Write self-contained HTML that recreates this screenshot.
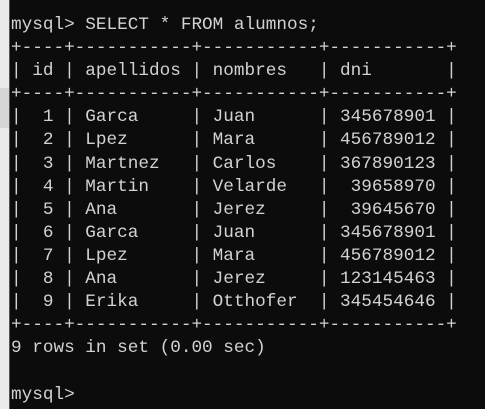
<!DOCTYPE html>
<html><head><style>
body{margin:0;width:485px;height:409px;overflow:hidden;background:#0c0c0c;position:relative}
.strip{position:absolute;left:0;top:0;width:9px;height:409px;background:#eaeaea;border-right:1px solid #555}
.band{position:absolute;left:0;top:88px;width:9px;height:40px;background:#d6d6d6}
pre{position:absolute;left:11px;top:14px;margin:0;font-family:"Liberation Mono",monospace;font-size:17.7px;line-height:23.1px;color:#d2d2d2;letter-spacing:0}
</style></head><body>
<div class="strip"></div><div class="band"></div>
<pre>mysql&gt; SELECT * FROM alumnos;
+----+-----------+-----------+-----------+
| id | apellidos | nombres   | dni       |
+----+-----------+-----------+-----------+
|  1 | Garca     | Juan      | 345678901 |
|  2 | Lpez      | Mara      | 456789012 |
|  3 | Martnez   | Carlos    | 367890123 |
|  4 | Martin    | Velarde   |  39658970 |
|  5 | Ana       | Jerez     |  39645670 |
|  6 | Garca     | Juan      | 345678901 |
|  7 | Lpez      | Mara      | 456789012 |
|  8 | Ana       | Jerez     | 123145463 |
|  9 | Erika     | Otthofer  | 345454646 |
+----+-----------+-----------+-----------+
9 rows in set (0.00 sec)

mysql&gt;</pre>
</body></html>
